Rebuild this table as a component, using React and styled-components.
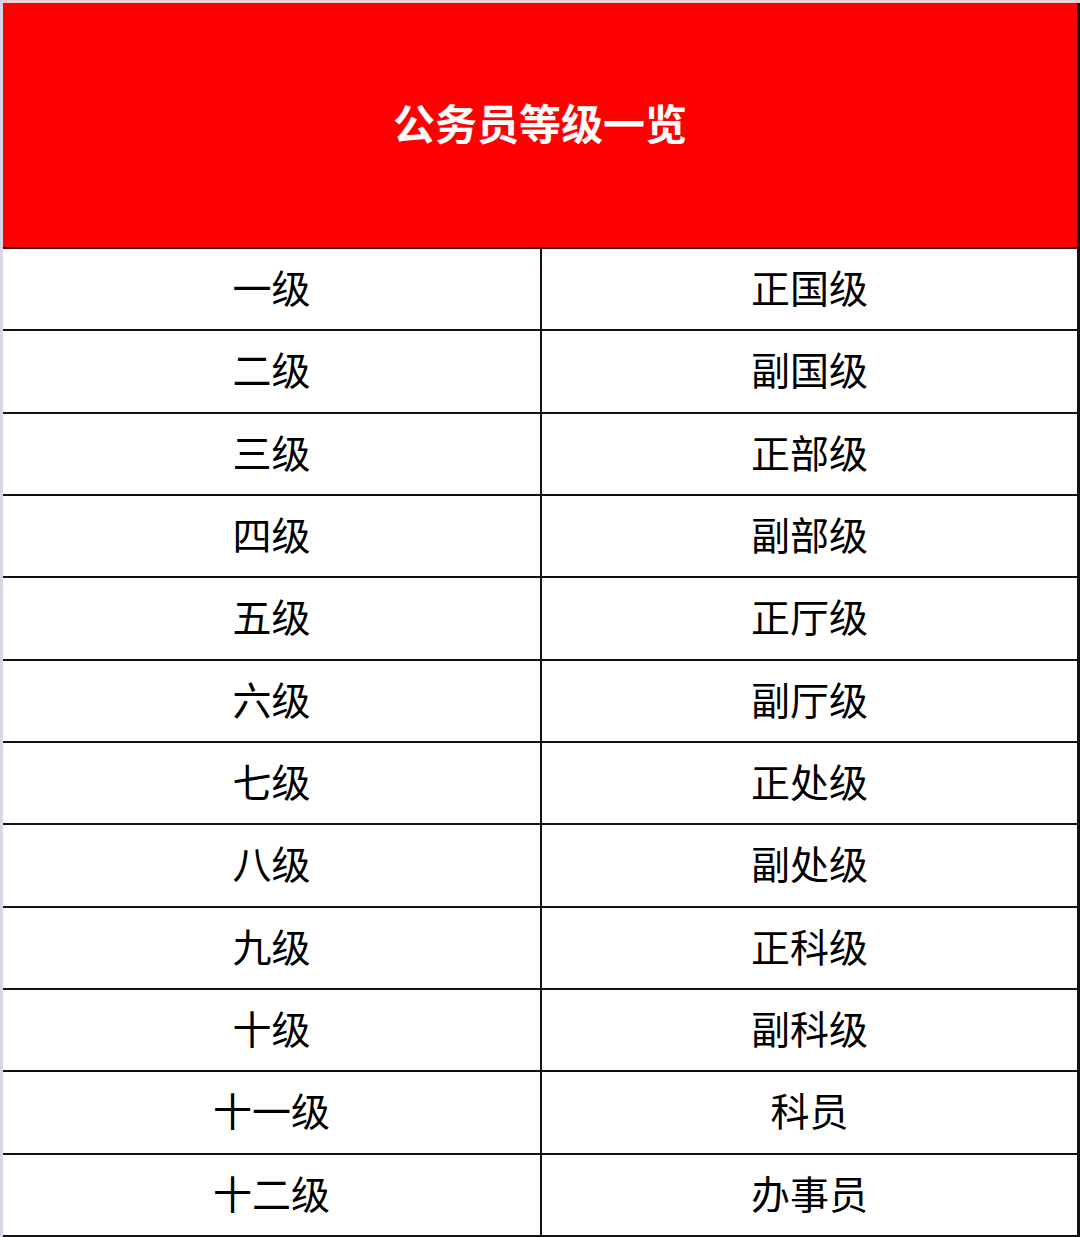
import React from 'react';
import styled, { createGlobalStyle } from 'styled-components';

const GlobalStyle = createGlobalStyle`
  html, body {
    margin: 0;
    padding: 0;
    background: #ffffff;
  }
  * {
    box-sizing: border-box;
  }
`;

const rows = [
  ['一级', '正国级'],
  ['二级', '副国级'],
  ['三级', '正部级'],
  ['四级', '副部级'],
  ['五级', '正厅级'],
  ['六级', '副厅级'],
  ['七级', '正处级'],
  ['八级', '副处级'],
  ['九级', '正科级'],
  ['十级', '副科级'],
  ['十一级', '科员'],
  ['十二级', '办事员'],
];

/* Page frame - light scan edge on top / left */
const StyledPage = styled.div`
  width: 1080px;
  height: 1237px;
  padding: 3px 0 0 3px;
  background: #ffffff;
  box-shadow: inset 3px 0 0 #d6d6e4, inset 0 3px 0 #ecd2d2;
  overflow: hidden;
  font-family: "Noto Sans CJK SC", "Noto Sans", sans-serif;
`;

const StyledTable = styled.div`
  width: 1077px;
  border-right: 3px solid #111111;
  display: flex;
  flex-direction: column;
`;

const StyledHeader = styled.div`
  height: 246px;
  background: #ff0000;
  border-bottom: 2px solid #3a0000;
  display: flex;
  align-items: center;
  justify-content: center;
  padding-bottom: 6px;
  color: #ffffff;
  font-size: 42px;
  font-weight: 700;
  line-height: 1;
`;

const StyledGrid = styled.div`
  display: grid;
  grid-template-columns: 539px 1fr;
  grid-auto-rows: 82.33px;
`;

const StyledCell = styled.div`
  display: flex;
  align-items: center;
  justify-content: center;
  border-bottom: 2.5px solid #111111;
  border-right: ${p => (p.$divider ? '2px solid #111111' : '0')};
  padding-bottom: 5px;
  color: #000000;
  font-size: 39px;
  font-weight: 400;
  line-height: 1;
`;

export default function App() {
  return (
    <>
      <GlobalStyle />
      <StyledPage>
        <StyledTable>
          <StyledHeader>公务员等级一览</StyledHeader>
          <StyledGrid>
            {rows.map(([level, rank]) => (
              <React.Fragment key={level}>
                <StyledCell $divider>{level}</StyledCell>
                <StyledCell>{rank}</StyledCell>
              </React.Fragment>
            ))}
          </StyledGrid>
        </StyledTable>
      </StyledPage>
    </>
  );
}
